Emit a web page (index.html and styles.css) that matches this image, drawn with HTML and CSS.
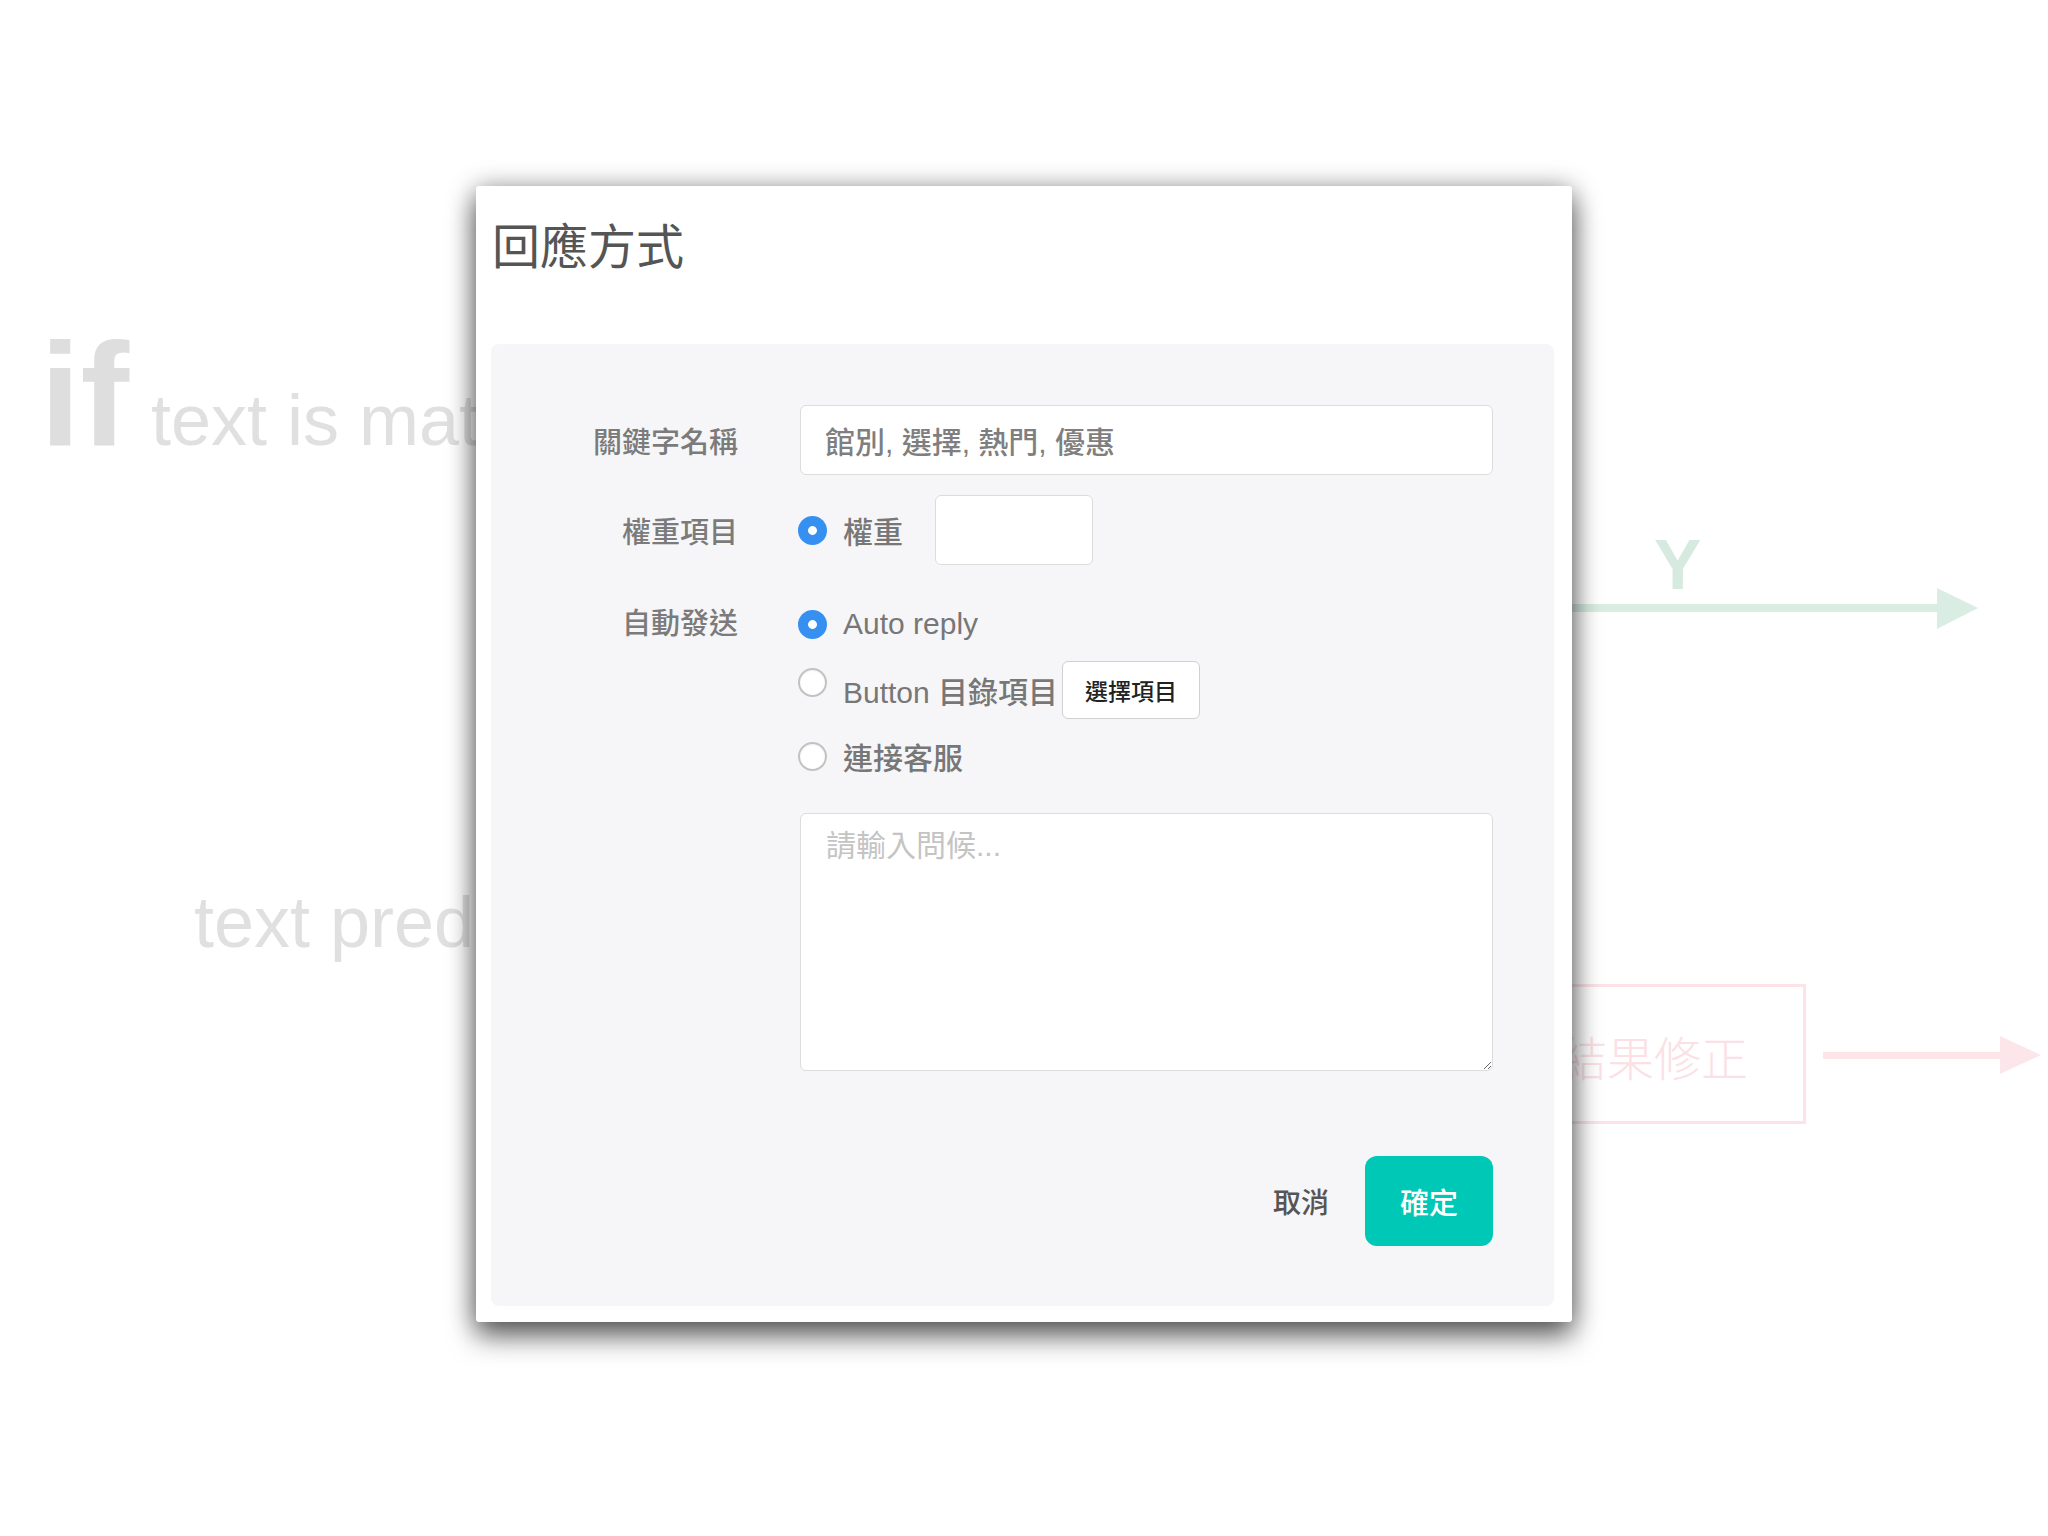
FILE: index.html
```html
<!DOCTYPE html>
<html lang="zh-Hant">
<head>
<meta charset="utf-8">
<title>回應方式</title>
<link rel="stylesheet" href="styles.css">
</head>
<body>
<div class="stage">
  <div class="diagram">
    <svg class="diagram-lines" width="2048" height="1536" viewBox="0 0 2048 1536">
      <rect x="1300" y="604" width="640" height="8" fill="#d9ede3"/>
      <polygon points="1937,588 1978,608 1937,629" fill="#d9ede3"/>
      <rect x="1300" y="985.5" width="504.5" height="137" fill="none" stroke="#fde3e8" stroke-width="3"/>
      <rect x="1823" y="1052" width="180" height="7" fill="#fde6ea"/>
      <polygon points="2000,1036 2041,1055 2000,1074" fill="#fde6ea"/>
    </svg>
    <div class="bg-text bg-if">if</div>
    <div class="bg-text bg-cond">text is mat</div>
    <div class="bg-text bg-pred">text pred</div>
    <div class="bg-text bg-y">Y</div>
    <div class="bg-text bg-fix">結果修正</div>
  </div>

  <div class="modal">
    <h2 class="modal-title">回應方式</h2>
    <form class="panel">
      <div class="row row-keyword">
        <span class="field-label">關鍵字名稱</span>
        <input class="text-input keyword-input" type="text" value="館別, 選擇, 熱門, 優惠">
      </div>

      <div class="row row-weight">
        <span class="field-label">權重項目</span>
        <label class="option">
          <input class="radio" type="radio" name="weight" checked>
          <span class="option-text">權重</span>
        </label>
        <input class="text-input weight-input" type="text">
      </div>

      <div class="row row-send">
        <span class="field-label field-label-top">自動發送</span>
        <div class="options">
          <label class="option option-line">
            <input class="radio" type="radio" name="send" checked>
            <span class="option-text">Auto reply</span>
          </label>
          <div class="option option-line">
            <input class="radio radio-raised" type="radio" name="send">
            <span class="option-text">Button 目錄項目</span>
            <button class="pick-button" type="button">選擇項目</button>
          </div>
          <label class="option option-line">
            <input class="radio" type="radio" name="send">
            <span class="option-text">連接客服</span>
          </label>
        </div>
      </div>

      <div class="row row-message">
        <span class="field-label"></span>
        <textarea class="message" placeholder="請輸入問候..."></textarea>
      </div>

      <div class="footer">
        <button class="btn-cancel" type="button">取消</button>
        <button class="btn-confirm" type="button">確定</button>
      </div>
    </form>
  </div>
</div>
</body>
</html>
```

FILE: styles.css
```css
* { box-sizing: border-box; }

html, body {
  margin: 0;
  padding: 0;
  background: #ffffff;
}

body {
  font-family: "Liberation Sans", "Noto Sans CJK TC", sans-serif;
}

.stage {
  position: relative;
  width: 2048px;
  height: 1536px;
  overflow: hidden;
  background: #ffffff;
}

/* background flow diagram */
.diagram {
  position: absolute;
  inset: 0;
}

.diagram-lines {
  position: absolute;
  left: 0;
  top: 0;
}

.bg-text {
  position: absolute;
  line-height: 1.2;
  white-space: nowrap;
}

.bg-if {
  left: 40px;
  top: 307px;
  font-size: 146px;
  font-weight: 700;
  color: #dedede;
}

.bg-cond {
  left: 151px;
  top: 377px;
  font-size: 72px;
  color: #e0e0e0;
}

.bg-pred {
  left: 194px;
  top: 879px;
  font-size: 72px;
  color: #e0e0e0;
}

.bg-y {
  left: 1654px;
  top: 522px;
  font-size: 71px;
  font-weight: 700;
  color: #d6eadf;
}

.bg-fix {
  left: 1560px;
  top: 1023px;
  font-size: 47px;
  line-height: 1.4;
  font-weight: 300;
  font-family: "Noto Sans CJK TC", sans-serif;
  color: #fbe1e6;
}

/* modal */
.modal {
  position: absolute;
  left: 476px;
  top: 186px;
  width: 1096px;
  padding: 30px 18px 16px 15px;
  background: #ffffff;
  border-radius: 3px;
  box-shadow: 0 14px 28px rgba(0, 0, 0, 0.6), 0 0 26px rgba(0, 0, 0, 0.28);
}

.modal-title {
  margin: 0 0 64px 1px;
  font-size: 48px;
  line-height: 64px;
  font-weight: 400;
  color: #555555;
}

.panel {
  display: flex;
  flex-direction: column;
  height: 962px;
  padding: 61px 61px 60px 0;
  background: #f6f6f8;
  border-radius: 8px;
}

.row {
  display: flex;
  align-items: center;
}

.field-label {
  flex: 0 0 247px;
  margin-right: 62px;
  text-align: right;
  font-size: 29px;
  font-weight: 500;
  color: #7b7b7b;
}

.field-label-top {
  align-self: flex-start;
  line-height: 58px;
}

.text-input {
  height: 70px;
  border: 1.5px solid #dcdcdc;
  border-radius: 6px;
  background: #ffffff;
  font-family: inherit;
  font-size: 30px;
  font-weight: 500;
  color: #7f7f7f;
  outline: none;
}

.keyword-input {
  flex: 1;
  padding: 0 24px;
}

.row-weight {
  margin-top: 20px;
}

.weight-input {
  width: 158px;
  margin-left: 32px;
}

.row-send {
  margin-top: 30px;
}

.options {
  display: flex;
  flex-direction: column;
  gap: 8px;
}

.option {
  display: flex;
  align-items: center;
}

.option-line {
  height: 58px;
}

.option-text {
  font-size: 30px;
  font-weight: 500;
  color: #777777;
  white-space: nowrap;
}

.radio {
  appearance: none;
  -webkit-appearance: none;
  flex: 0 0 29px;
  width: 29px;
  height: 29px;
  margin: 0 16px 0 -2px;
  border: 2px solid #c2c2c2;
  border-radius: 50%;
  background: #ffffff;
  box-shadow: inset 0 1px 2px rgba(0, 0, 0, 0.06);
}

.radio:checked {
  border: none;
  box-shadow: none;
  background: radial-gradient(circle, #ffffff 0 4px, #3590f2 4.8px);
}

.radio-raised {
  align-self: flex-start;
  margin-top: 7px;
}

.pick-button {
  width: 138px;
  height: 58px;
  margin-left: 4px;
  padding: 0;
  border: 1.5px solid #d0d0d0;
  border-radius: 6px;
  background: #ffffff;
  font-family: "Noto Sans CJK TC", sans-serif;
  font-size: 23px;
  font-weight: 500;
  color: #222222;
}

.row-message {
  margin-top: 28px;
}

.message {
  flex: 1;
  height: 258px;
  padding: 12px 25px;
  border: 1.5px solid #dcdcdc;
  border-radius: 6px;
  background: #ffffff;
  font-family: inherit;
  font-size: 30px;
  line-height: 40px;
  color: #777777;
  outline: none;
}

.message::placeholder {
  color: #c4c4c4;
}

.footer {
  display: flex;
  justify-content: flex-end;
  align-items: center;
  margin-top: 85px;
}

.btn-cancel {
  margin-right: 36px;
  padding: 0;
  border: none;
  background: none;
  font-family: "Noto Sans CJK TC", sans-serif;
  font-size: 28px;
  font-weight: 500;
  color: #555555;
}

.btn-confirm {
  width: 128px;
  height: 90px;
  padding: 0;
  border: none;
  border-radius: 12px;
  background: #00c8b6;
  font-family: "Noto Sans CJK TC", sans-serif;
  font-size: 29px;
  font-weight: 500;
  color: #ffffff;
}
```
